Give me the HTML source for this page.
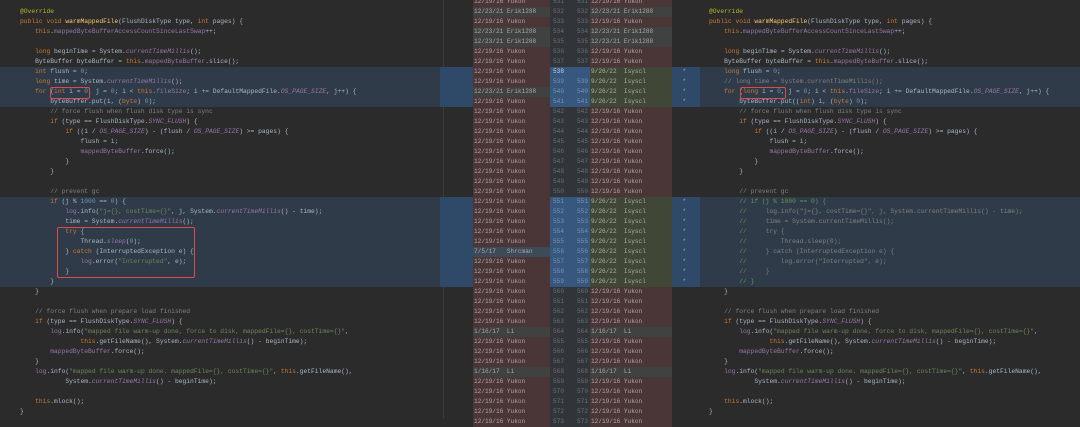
<!DOCTYPE html>
<html><head><meta charset="utf-8"><style>
*{margin:0;padding:0;box-sizing:border-box}
body{width:1080px;height:419px;background:#2b2b2b;position:relative;overflow:hidden;font-family:"Liberation Mono",monospace;font-size:6.3px;color:#a9b7c6}
.abs{position:absolute}
.code{position:absolute;top:7px;white-space:pre;line-height:10px}
.k{color:#cc7832}.s{color:#6a8759}.f{color:#9876aa}.c{color:#808080}.n{color:#6897bb}.a{color:#bbb529}.m{color:#ffc66d}.i{color:#9876aa;font-style:italic}.g{color:#629755}
.row{position:absolute;left:440px;width:260px;height:10px;line-height:10px;white-space:pre;font-size:6.1px}
.row .lb{position:absolute;left:33px;width:77px;height:10px;background:#4a3637;padding-left:1px;color:#b0a4a4}
.row .l1{position:absolute;left:110px;width:20px;height:10px;background:#313438;color:#6b6e72;padding-left:3px}
.row .l2{position:absolute;left:130px;width:20px;height:10px;background:#313438;color:#6b6e72;text-align:right;padding-right:2px}
.row .rb{position:absolute;left:150px;width:82px;height:10px;background:#4a3637;padding-left:1px;color:#b0a4a4}
.row.bl{background:#2f4a68}
.row.bl .l1,.row.bl .l2{background:#36577e;color:#7a93b0}
.row .e{background:#3f4241!important}
.row .gr{background:#404737!important;color:#a9b09a}
.row .sh{background:#3d4a58!important}
.box{position:absolute;border:1.5px solid #e04a45;border-radius:2px}
</style></head><body>
<div class="abs" style="left:0;top:67px;width:443px;height:40px;background:#2f3b48"></div>
<div class="abs" style="left:0;top:197px;width:443px;height:90px;background:#2f3b48"></div>
<div class="abs" style="left:443px;top:0;width:1px;height:419px;background:#3a3a3a"></div>
<div class="abs" style="left:453px;top:67px;width:20px;height:40px;background:#3a6a9a"></div>
<div class="abs" style="left:453px;top:197px;width:20px;height:90px;background:#3a6a9a"></div>
<div class="abs" style="left:700px;top:67px;width:380px;height:40px;background:#2f3b48"></div>
<div class="abs" style="left:700px;top:197px;width:380px;height:90px;background:#2f3b48"></div>
<div class="abs" style="left:672px;top:0;width:28px;height:419px;background:#2b2b2b"></div>
<div class="abs" style="left:672px;top:67px;width:22px;height:40px;background:#3a6a9a"></div>
<div class="abs" style="left:672px;top:197px;width:22px;height:90px;background:#3a6a9a"></div>

<div class="code" style="left:20px"><span class="a">@Override</span>
<span class="k">public void </span><span class="m">warmMappedFile</span>(FlushDiskType type, <span class="k">int </span>pages) {
    <span class="k">this</span>.<span class="f">mappedByteBufferAccessCountSinceLastSwap</span>++;

    <span class="k">long </span>beginTime = System.<span class="i">currentTimeMillis</span>();
    ByteBuffer byteBuffer = <span class="k">this</span>.<span class="f">mappedByteBuffer</span>.slice();
    <span class="k">int </span>flush = <span class="n">0</span>;
    <span class="k">long </span>time = System.<span class="i">currentTimeMillis</span>();
    <span class="k">for </span>(<span class="k">int </span>i = <span class="n">0</span>, j = <span class="n">0</span>; i &lt; <span class="k">this</span>.<span class="f">fileSize</span>; i += DefaultMappedFile.<span class="i">OS_PAGE_SIZE</span>, j++) {
        byteBuffer.put(i, (<span class="k">byte</span>) <span class="n">0</span>);
        <span class="c">// force flush when flush disk type is sync</span>
        <span class="k">if </span>(type == FlushDiskType.<span class="i">SYNC_FLUSH</span>) {
            <span class="k">if </span>((i / <span class="i">OS_PAGE_SIZE</span>) - (flush / <span class="i">OS_PAGE_SIZE</span>) &gt;= pages) {
                flush = i;
                <span class="f">mappedByteBuffer</span>.force();
            }
        }

        <span class="c">// prevent gc</span>
        <span class="k">if </span>(j % <span class="n">1000</span> == <span class="n">0</span>) {
            <span class="f">log</span>.info(<span class="s">"j={}, costTime={}"</span>, j, System.<span class="i">currentTimeMillis</span>() - time);
            time = System.<span class="i">currentTimeMillis</span>();
            <span class="k">try </span>{
                Thread.<span class="i">sleep</span>(<span class="n">0</span>);
            } <span class="k">catch </span>(InterruptedException e) {
                <span class="f">log</span>.error(<span class="s">"Interrupted"</span>, e);
            }
        }
    }

    <span class="c">// force flush when prepare load finished</span>
    <span class="k">if </span>(type == FlushDiskType.<span class="i">SYNC_FLUSH</span>) {
        <span class="f">log</span>.info(<span class="s">"mapped file warm-up done, force to disk, mappedFile={}, costTime={}"</span>,
                <span class="k">this</span>.getFileName(), System.<span class="i">currentTimeMillis</span>() - beginTime);
        <span class="f">mappedByteBuffer</span>.force();
    }
    <span class="f">log</span>.info(<span class="s">"mapped file warm-up done. mappedFile={}, costTime={}"</span>, <span class="k">this</span>.getFileName(),
            System.<span class="i">currentTimeMillis</span>() - beginTime);

    <span class="k">this</span>.mlock();
}</div>

<div class="code" style="left:709px"><span class="a">@Override</span>
<span class="k">public void </span><span class="m">warmMappedFile</span>(FlushDiskType type, <span class="k">int </span>pages) {
    <span class="k">this</span>.<span class="f">mappedByteBufferAccessCountSinceLastSwap</span>++;

    <span class="k">long </span>beginTime = System.<span class="i">currentTimeMillis</span>();
    ByteBuffer byteBuffer = <span class="k">this</span>.<span class="f">mappedByteBuffer</span>.slice();
    <span class="k">long </span>flush = <span class="n">0</span>;
    <span class="c">// long time = System.currentTimeMillis();</span>
    <span class="k">for </span>(<span class="k">long </span>i = <span class="n">0</span>, j = <span class="n">0</span>; i &lt; <span class="k">this</span>.<span class="f">fileSize</span>; i += DefaultMappedFile.<span class="i">OS_PAGE_SIZE</span>, j++) {
        byteBuffer.put((<span class="k">int</span>) i, (<span class="k">byte</span>) <span class="n">0</span>);
        <span class="c">// force flush when flush disk type is sync</span>
        <span class="k">if </span>(type == FlushDiskType.<span class="i">SYNC_FLUSH</span>) {
            <span class="k">if </span>((i / <span class="i">OS_PAGE_SIZE</span>) - (flush / <span class="i">OS_PAGE_SIZE</span>) &gt;= pages) {
                flush = i;
                <span class="f">mappedByteBuffer</span>.force();
            }
        }

        <span class="c">// prevent gc</span>
        <span class="g">// if (j % 1000 == 0) {</span>
        <span class="g">//</span><span class="c">     log.info("j={}, costTime={}", j, System.currentTimeMillis() - time);</span>
        <span class="g">//</span><span class="c">     time = System.currentTimeMillis();</span>
        <span class="g">//</span><span class="c">     try {</span>
        <span class="g">//</span><span class="c">         Thread.sleep(0);</span>
        <span class="g">//</span><span class="c">     } catch (InterruptedException e) {</span>
        <span class="g">//</span><span class="c">         log.error("Interrupted", e);</span>
        <span class="g">//</span><span class="c">     }</span>
        <span class="g">// }</span>
    }

    <span class="c">// force flush when prepare load finished</span>
    <span class="k">if </span>(type == FlushDiskType.<span class="i">SYNC_FLUSH</span>) {
        <span class="f">log</span>.info(<span class="s">"mapped file warm-up done, force to disk, mappedFile={}, costTime={}"</span>,
                <span class="k">this</span>.getFileName(), System.<span class="i">currentTimeMillis</span>() - beginTime);
        <span class="f">mappedByteBuffer</span>.force();
    }
    <span class="f">log</span>.info(<span class="s">"mapped file warm-up done. mappedFile={}, costTime={}"</span>, <span class="k">this</span>.getFileName(),
            System.<span class="i">currentTimeMillis</span>() - beginTime);

    <span class="k">this</span>.mlock();
}</div>

<div class="box" style="left:50px;top:87px;width:40px;height:12px"></div>
<div class="box" style="left:57px;top:227px;width:138px;height:51px"></div>
<div class="box" style="left:740px;top:87px;width:46px;height:12px"></div>

<div class="row" style="top:-3px"><span class="lb">12/19/16 Yukon</span><span class="l1">531</span><span class="l2">531</span><span class="rb">12/19/16 Yukon</span></div>
<div class="row" style="top:7px"><span class="lb e">12/23/21 Erik1288</span><span class="l1">532</span><span class="l2">532</span><span class="rb e">12/23/21 Erik1288</span></div>
<div class="row" style="top:17px"><span class="lb">12/19/16 Yukon</span><span class="l1">533</span><span class="l2">533</span><span class="rb">12/19/16 Yukon</span></div>
<div class="row" style="top:27px"><span class="lb e">12/23/21 Erik1288</span><span class="l1">534</span><span class="l2">534</span><span class="rb e">12/23/21 Erik1288</span></div>
<div class="row" style="top:37px"><span class="lb e">12/23/21 Erik1288</span><span class="l1">535</span><span class="l2">535</span><span class="rb e">12/23/21 Erik1288</span></div>
<div class="row" style="top:47px"><span class="lb">12/19/16 Yukon</span><span class="l1">536</span><span class="l2">536</span><span class="rb">12/19/16 Yukon</span></div>
<div class="row" style="top:57px"><span class="lb">12/19/16 Yukon</span><span class="l1">537</span><span class="l2">537</span><span class="rb">12/19/16 Yukon</span></div>
<div class="row bl" style="top:67px"><span class="lb">12/19/16 Yukon</span><span class="l1" style="color:#c8d4e0">538</span><span class="l2"></span><span class="rb gr">9/26/22  Isyscl          *</span></div>
<div class="row bl" style="top:77px"><span class="lb">12/19/16 Yukon</span><span class="l1">539</span><span class="l2">539</span><span class="rb gr">9/26/22  Isyscl          *</span></div>
<div class="row bl" style="top:87px"><span class="lb e">12/23/21 Erik1288</span><span class="l1">540</span><span class="l2">540</span><span class="rb gr">9/26/22  Isyscl          *</span></div>
<div class="row bl" style="top:97px"><span class="lb">12/19/16 Yukon</span><span class="l1">541</span><span class="l2">541</span><span class="rb gr">9/26/22  Isyscl          *</span></div>
<div class="row" style="top:107px"><span class="lb">12/19/16 Yukon</span><span class="l1">542</span><span class="l2">542</span><span class="rb">12/19/16 Yukon</span></div>
<div class="row" style="top:117px"><span class="lb">12/19/16 Yukon</span><span class="l1">543</span><span class="l2">543</span><span class="rb">12/19/16 Yukon</span></div>
<div class="row" style="top:127px"><span class="lb">12/19/16 Yukon</span><span class="l1">544</span><span class="l2">544</span><span class="rb">12/19/16 Yukon</span></div>
<div class="row" style="top:137px"><span class="lb">12/19/16 Yukon</span><span class="l1">545</span><span class="l2">545</span><span class="rb">12/19/16 Yukon</span></div>
<div class="row" style="top:147px"><span class="lb">12/19/16 Yukon</span><span class="l1">546</span><span class="l2">546</span><span class="rb">12/19/16 Yukon</span></div>
<div class="row" style="top:157px"><span class="lb">12/19/16 Yukon</span><span class="l1">547</span><span class="l2">547</span><span class="rb">12/19/16 Yukon</span></div>
<div class="row" style="top:167px"><span class="lb">12/19/16 Yukon</span><span class="l1">548</span><span class="l2">548</span><span class="rb">12/19/16 Yukon</span></div>
<div class="row" style="top:177px"><span class="lb">12/19/16 Yukon</span><span class="l1">549</span><span class="l2">549</span><span class="rb">12/19/16 Yukon</span></div>
<div class="row" style="top:187px"><span class="lb">12/19/16 Yukon</span><span class="l1">550</span><span class="l2">550</span><span class="rb">12/19/16 Yukon</span></div>
<div class="row bl" style="top:197px"><span class="lb">12/19/16 Yukon</span><span class="l1">551</span><span class="l2">551</span><span class="rb gr">9/26/22  Isyscl          *</span></div>
<div class="row bl" style="top:207px"><span class="lb">12/19/16 Yukon</span><span class="l1">552</span><span class="l2">552</span><span class="rb gr">9/26/22  Isyscl          *</span></div>
<div class="row bl" style="top:217px"><span class="lb">12/19/16 Yukon</span><span class="l1">553</span><span class="l2">553</span><span class="rb gr">9/26/22  Isyscl          *</span></div>
<div class="row bl" style="top:227px"><span class="lb">12/19/16 Yukon</span><span class="l1">554</span><span class="l2">554</span><span class="rb gr">9/26/22  Isyscl          *</span></div>
<div class="row bl" style="top:237px"><span class="lb">12/19/16 Yukon</span><span class="l1">555</span><span class="l2">555</span><span class="rb gr">9/26/22  Isyscl          *</span></div>
<div class="row bl" style="top:247px"><span class="lb sh">7/5/17   Shrcman</span><span class="l1">556</span><span class="l2">556</span><span class="rb gr">9/26/22  Isyscl          *</span></div>
<div class="row bl" style="top:257px"><span class="lb">12/19/16 Yukon</span><span class="l1">557</span><span class="l2">557</span><span class="rb gr">9/26/22  Isyscl          *</span></div>
<div class="row bl" style="top:267px"><span class="lb">12/19/16 Yukon</span><span class="l1">558</span><span class="l2">558</span><span class="rb gr">9/26/22  Isyscl          *</span></div>
<div class="row bl" style="top:277px"><span class="lb">12/19/16 Yukon</span><span class="l1">559</span><span class="l2">559</span><span class="rb gr">9/26/22  Isyscl          *</span></div>
<div class="row" style="top:287px"><span class="lb">12/19/16 Yukon</span><span class="l1">560</span><span class="l2">560</span><span class="rb">12/19/16 Yukon</span></div>
<div class="row" style="top:297px"><span class="lb">12/19/16 Yukon</span><span class="l1">561</span><span class="l2">561</span><span class="rb">12/19/16 Yukon</span></div>
<div class="row" style="top:307px"><span class="lb">12/19/16 Yukon</span><span class="l1">562</span><span class="l2">562</span><span class="rb">12/19/16 Yukon</span></div>
<div class="row" style="top:317px"><span class="lb">12/19/16 Yukon</span><span class="l1">563</span><span class="l2">563</span><span class="rb">12/19/16 Yukon</span></div>
<div class="row" style="top:327px"><span class="lb e">1/16/17  Li</span><span class="l1">564</span><span class="l2">564</span><span class="rb e">1/16/17  Li</span></div>
<div class="row" style="top:337px"><span class="lb">12/19/16 Yukon</span><span class="l1">565</span><span class="l2">565</span><span class="rb">12/19/16 Yukon</span></div>
<div class="row" style="top:347px"><span class="lb">12/19/16 Yukon</span><span class="l1">566</span><span class="l2">566</span><span class="rb">12/19/16 Yukon</span></div>
<div class="row" style="top:357px"><span class="lb">12/19/16 Yukon</span><span class="l1">567</span><span class="l2">567</span><span class="rb">12/19/16 Yukon</span></div>
<div class="row" style="top:367px"><span class="lb e">1/16/17  Li</span><span class="l1">568</span><span class="l2">568</span><span class="rb e">1/16/17  Li</span></div>
<div class="row" style="top:377px"><span class="lb">12/19/16 Yukon</span><span class="l1">569</span><span class="l2">569</span><span class="rb">12/19/16 Yukon</span></div>
<div class="row" style="top:387px"><span class="lb">12/19/16 Yukon</span><span class="l1">570</span><span class="l2">570</span><span class="rb">12/19/16 Yukon</span></div>
<div class="row" style="top:397px"><span class="lb">12/19/16 Yukon</span><span class="l1">571</span><span class="l2">571</span><span class="rb">12/19/16 Yukon</span></div>
<div class="row" style="top:407px"><span class="lb">12/19/16 Yukon</span><span class="l1">572</span><span class="l2">572</span><span class="rb">12/19/16 Yukon</span></div>
<div class="row" style="top:417px"><span class="lb">12/19/16 Yukon</span><span class="l1">573</span><span class="l2">573</span><span class="rb">12/19/16 Yukon</span></div>
</body></html>
